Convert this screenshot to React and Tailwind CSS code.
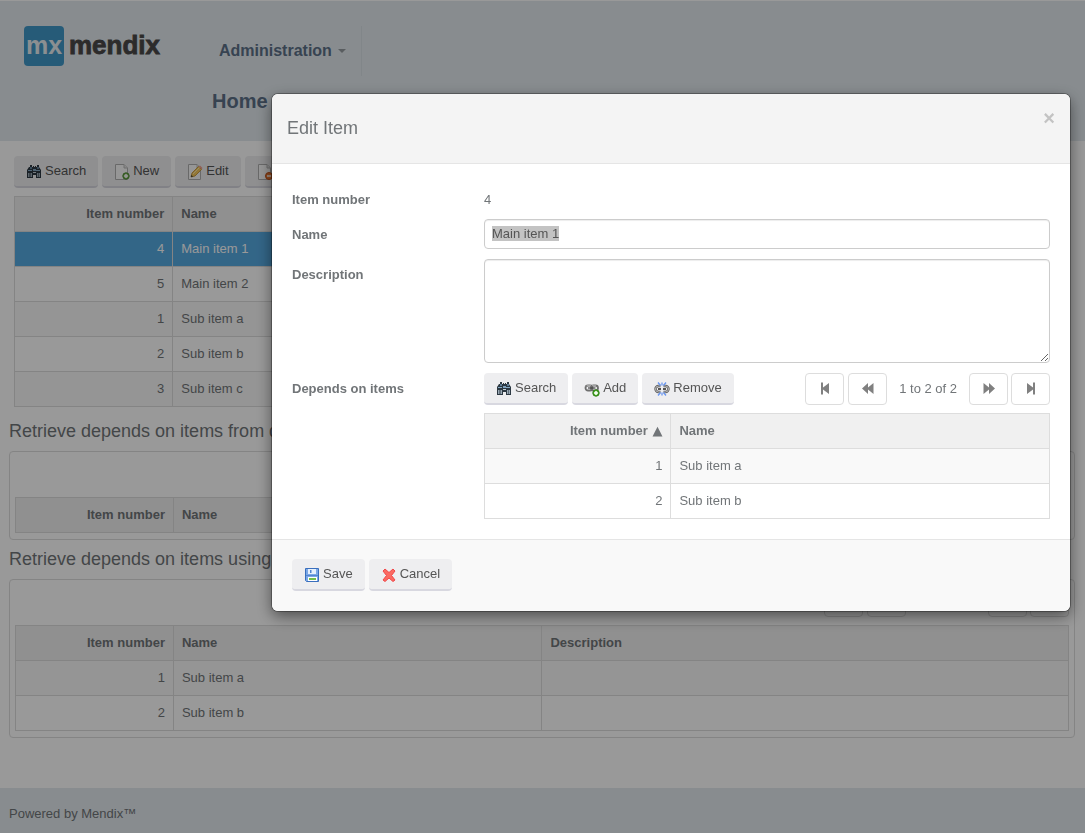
import { useEffect, useRef } from "react";

function BinocularsIcon() {
  return (
    <svg width="16" height="16" viewBox="0 0 16 16" aria-hidden="true">
      <path d="M4 1h2v2h1V2h1v1h1V2h1v1h1V1h2v2l2 3v8H10v-3H7v3H1V6l2-3h1z" fill="#2c3842" />
      <path d="M4 3h2v2H4zM11 3h2v2h-2z" fill="#5f7d96" />
      <path d="M2 6h4v1H2zM10 6h4v1h-4z" fill="#86a9c4" />
      <path d="M2 9h1.500v4H2zM4.500 9H6v4H4.500zM11 9h1.500v4H11zM13 9h1v4h-1z" fill="#9aa9b5" />
      <path d="M7 5h3v2H7z" fill="#7fa2bd" />
      <path d="M7 8h3v1H7z" fill="#c3ced6" />
    </svg>
  );
}

function PageIcon({ kind }) {
  return (
    <svg width="16" height="16" viewBox="0 0 16 16" aria-hidden="true">
      <path d="M1.500 .5h8.500l3.500 3.500v11.500h-12z" fill="#fbfbfb" stroke="#b0b0b0" />
      <path d="M10 .5v3.500h3.500" fill="#e4e4e4" stroke="#b8b8b8" />
      {kind === "new" && (
        <g>
          <circle cx="12" cy="12" r="3.200" fill="#7fb85e" stroke="#4a8a30" />
          <path d="M12 10v4M10 12h4" stroke="#fff" strokeWidth="1.500" />
        </g>
      )}
      {kind === "delete" && (
        <g>
          <circle cx="12" cy="12" r="3.500" fill="#f07a30" stroke="#c2521b" />
          <path d="M10 12h4" stroke="#fff" strokeWidth="1.500" />
        </g>
      )}
      {kind === "edit" && (
        <g>
          <path d="M4 13l1-4 6.500-6.500 3 3L8 12z" fill="#f5c65a" stroke="#b98a2c" strokeWidth=".8" />
          <path d="M11.500 2.500l3 3 1-1.500-2.500-2.500z" fill="#f0a090" />
          <path d="M6 10l6.500-6.500" stroke="#fde9a8" />
          <path d="M4 13l.5-2 1.500 1.500z" fill="#333" />
        </g>
      )}
    </svg>
  );
}

function LinkIcon({ broken }) {
  return (
    <svg width="16" height="16" viewBox="0 0 16 16" aria-hidden="true">
      {broken ? (
        <g fill="none">
          <path d="M6.500 5h-2a2.500 2.500 0 0 0 0 6h2M9.500 5h2a2.500 2.500 0 0 1 0 6h-2" stroke="#5c5c5c" strokeWidth="2.400" />
          <path d="M6.500 5h-2a2.500 2.500 0 0 0 0 6h2M9.500 5h2a2.500 2.500 0 0 1 0 6h-2" stroke="#d0d0d0" strokeWidth=".8" />
          <path d="M4 8h3M9 8h3" stroke="#555" strokeWidth="1.800" />
          <path d="M8 1.500v3M4 1.500l2.500 3M12 1.500l-2.500 3M8 11.500v3M4 14.500l2.500-3M12 14.500l-2.500-3" stroke="#6795f2" strokeWidth="1.300" />
        </g>
      ) : (
        <g fill="none">
          <rect x="1.500" y="4.500" width="7" height="5" rx="2.500" stroke="#6f6f6f" strokeWidth="1.800" />
          <rect x="7" y="4.500" width="7" height="5" rx="2.500" stroke="#6f6f6f" strokeWidth="1.800" />
          <path d="M2 5.500a2 2 0 0 1 2-1h3M8 4.500h4" stroke="#c4c4c4" strokeWidth=".6" />
          <path d="M4 7h7.500" stroke="#444" strokeWidth="1.200" />
          <circle cx="12" cy="12" r="3.200" fill="#4fb02c" stroke="#2f7d15" />
          <path d="M12 10v4M10 12h4" stroke="#fff" strokeWidth="1.500" />
        </g>
      )}
    </svg>
  );
}

function SaveIcon() {
  return (
    <svg width="16" height="16" viewBox="0 0 16 16" aria-hidden="true">
      <path d="M1.500 1.500h13v13h-12l-1-1z" fill="#7ba8e6" stroke="#3a6fbd" />
      <path d="M4 2h8v5H4z" fill="#e6f0fd" />
      <path d="M6 3h1.500v3H6z" fill="#4f82d0" />
      <path d="M2 8h12v1H2z" fill="#5486d2" />
      <path d="M4 10h9v4H4z" fill="#fff" />
      <path d="M5 11h7v2H5z" fill="#72bf4b" />
    </svg>
  );
}

function CrossIcon() {
  return (
    <svg width="16" height="16" viewBox="0 0 16 16" aria-hidden="true">
      <path d="M2 4l2-2 4 3.500L12 2l2 2-3.500 4.500L14 13l-2 1.500-4-3.500-4 3.500L2 13l3.500-4.500z" fill="#fb6a61" stroke="#f0474a" strokeLinejoin="round" />
    </svg>
  );
}

const pagerPaths = {
  first: "M3 1.500h2v5L11 2v11L5 8.500v5H3z",
  previous: "M1 7.500L7 2v4.500L12.500 2v11L7 8.500V13z",
  next: "M13 7.500L7 2v4.500L1.500 2v11L7 8.500V13z",
  last: "M11 1.500H9v5L3 2v11l6-4.500v5h2z",
};

function PagerButton({ kind }) {
  return (
    <button type="button" aria-label={kind + " page"} className="flex h-8 w-[39px] items-center justify-center rounded border border-[#ddd] bg-white pb-px">
      <svg width="14" height="15" viewBox="0 0 14 15" aria-hidden="true">
        <path d={pagerPaths[kind]} fill="#808080" />
      </svg>
    </button>
  );
}

function Pager({ status }) {
  return (
    <div className="flex items-center">
      <div className="flex gap-1">
        <PagerButton kind="first" />
        <PagerButton kind="previous" />
      </div>
      <span className="min-w-[81px] px-3 text-center">{status}</span>
      <div className="flex gap-[3px]">
        <PagerButton kind="next" />
        <PagerButton kind="last" />
      </div>
    </div>
  );
}

function ToolButton({ icon, children }) {
  return (
    <button type="button" className="flex h-8 items-center gap-[3px] rounded border-b-2 border-[#d8d8e0] bg-[#eeeef0] px-3 text-[#555]">
      <span className="pt-[2px]">{icon}</span>
      <span>{children}</span>
    </button>
  );
}

const cell = "h-[35px] border border-[#ddd] px-2";

function Grid({ columns, rows, selected, sorted }) {
  return (
    <table className="w-full table-fixed border-collapse bg-white">
      <colgroup>
        {columns.map(([title, width]) => (
          <col key={title} className={width} />
        ))}
      </colgroup>
      <thead>
        <tr className="bg-[#f0f0f0]">
          {columns.map(([title], index) => (
            <th key={title} scope="col" className={cell + (index === 0 ? " text-right" : " text-left")}>
              {title}
              {sorted === title && <span className="font-['DejaVu_Sans',sans-serif] leading-4"> ▲</span>}
            </th>
          ))}
        </tr>
      </thead>
      <tbody>
        {rows.map(([number, name], index) => (
          <tr key={number} className={selected === number ? "bg-[#56aae2] text-white" : index % 2 === 0 ? "bg-[#f9f9f9]" : "bg-white"}>
            <td className={cell + " text-right"}>{number}</td>
            <td className={cell}>{name}</td>
            {columns.length > 2 && <td className={cell} />}
          </tr>
        ))}
      </tbody>
    </table>
  );
}

const pageColumns = [
  ["Item number", "w-[15%]"],
  ["Name", "w-[35%]"],
  ["Description", "w-[50%]"],
];
const dialogColumns = [
  ["Item number", "w-[33%]"],
  ["Name", "w-[67%]"],
];
const allItems = [
  [4, "Main item 1"],
  [5, "Main item 2"],
  [1, "Sub item a"],
  [2, "Sub item b"],
  [3, "Sub item c"],
];
const subItems = [
  [1, "Sub item a"],
  [2, "Sub item b"],
];

function Logo() {
  return (
    <svg width="140" height="40" viewBox="0 0 140 40" role="img" aria-label="mendix">
      <rect width="40" height="40" rx="4" fill="#4098c8" />
      <text x="20" y="28" textAnchor="middle" fontFamily="'Liberation Sans', sans-serif" fontSize="25" fontWeight="700" fill="#e8eef2">mx</text>
      <text x="45" y="28" fontFamily="'Liberation Sans', sans-serif" fontSize="26" fontWeight="700" fill="#4a4849" stroke="#4a4849" strokeWidth=".8">mendix</text>
    </svg>
  );
}

function PageHeader() {
  return (
    <header className="flex h-[141px] border-t border-white bg-[#e3eaef] font-bold text-[#5c7088]">
      <a href="#home" className="w-[212px] shrink-0 pt-[25px] pl-6">
        <Logo />
      </a>
      <nav className="flex flex-col items-start pt-[25px]">
        <button type="button" className="flex h-[50px] items-center gap-[6px] border-r border-[#d8dfe4] pr-[15px] pl-[7px] text-base">
          Administration
          <svg width="8" height="4" viewBox="0 0 8 4" aria-hidden="true">
            <path d="M0 0h8L4 4z" fill="#959ba0" />
          </svg>
        </button>
        <a href="#home" className="flex h-[50px] items-center text-xl">Home</a>
      </nav>
    </header>
  );
}

function Panel({ status, rows }) {
  return (
    <div className="rounded border border-[#ddd] px-[5px] pt-[5px] pb-[6px]">
      <div className="mb-2 flex justify-end">
        <Pager status={status} />
      </div>
      <Grid columns={pageColumns} rows={rows} />
    </div>
  );
}

const fieldLabel = "h-[30px] leading-8 font-bold";

function EditDialog() {
  const nameRef = useRef(null);
  useEffect(() => {
    nameRef.current.focus();
    nameRef.current.select();
  }, []);
  return (
    <section role="dialog" aria-modal="true" aria-labelledby="dialog-title" className="w-[798px] max-w-full overflow-hidden rounded-md bg-white shadow-[0_0_0_1px_rgba(0,0,0,0.3),0_5px_15px_rgba(0,0,0,0.5)]">
      <header className="flex h-[70px] items-start justify-between border-b border-[#e5e5e5] bg-[#f4f4f4] px-[15px]">
        <h2 id="dialog-title" className="pt-5 text-lg">Edit Item</h2>
        <button type="button" aria-label="Close" className="mt-[14px] text-xl leading-5 font-bold text-[#c3c3c3]">×</button>
      </header>
      <form className="grid grid-cols-[192px_minmax(0,1fr)] gap-y-[10px] p-5">
        <div className="col-span-2 -mb-[5px] grid grid-cols-subgrid">
          <span className={fieldLabel}>Item number</span>
          <span className="h-[30px] leading-8">4</span>
        </div>
        <label htmlFor="item-name" className={fieldLabel}>Name</label>
        <input
          ref={nameRef}
          id="item-name"
          type="text"
          defaultValue="Main item 1"
          className="h-[30px] rounded border border-[#ccc] px-[7px] pb-[2px] text-[#555] shadow-[inset_0_1px_1px_rgba(0,0,0,0.075)] outline-none selection:bg-[#c3c3c3] selection:text-[#555]"
        />
        <label htmlFor="item-description" className={fieldLabel}>Description</label>
        <textarea id="item-description" className="h-[104px] resize-y rounded border border-[#ccc] px-[7px] py-1 shadow-[inset_0_1px_1px_rgba(0,0,0,0.075)] outline-none" />
        <span className={fieldLabel}>Depends on items</span>
        <div>
          <div className="mb-2 flex justify-between">
            <div className="flex gap-1">
              <ToolButton icon={<BinocularsIcon />}>Search</ToolButton>
              <ToolButton icon={<LinkIcon />}>Add</ToolButton>
              <ToolButton icon={<LinkIcon broken />}>Remove</ToolButton>
            </div>
            <Pager status="1 to 2 of 2" />
          </div>
          <Grid columns={dialogColumns} rows={subItems} sorted="Item number" />
        </div>
      </form>
      <footer className="flex gap-1 border-t border-[#e5e5e5] bg-[#f9f9f9] px-5 pt-[19px] pb-5">
        <ToolButton icon={<SaveIcon />}>Save</ToolButton>
        <ToolButton icon={<CrossIcon />}>Cancel</ToolButton>
      </footer>
    </section>
  );
}

export default function App() {
  return (
    <div className="flex min-h-screen flex-col bg-white font-['Liberation_Sans',sans-serif] text-[13px] leading-5 text-[#717578]">
      <PageHeader />
      <main className="grow pt-[15px] pr-[10px] pb-[49px] pl-[9px]">
        <div className="px-[5px] pb-[5px]">
          <div className="mb-2 flex gap-1">
            <ToolButton icon={<BinocularsIcon />}>Search</ToolButton>
            <ToolButton icon={<PageIcon kind="new" />}>New</ToolButton>
            <ToolButton icon={<PageIcon kind="edit" />}>Edit</ToolButton>
            <ToolButton icon={<PageIcon kind="delete" />}>Delete</ToolButton>
          </div>
          <Grid columns={pageColumns} rows={allItems} selected={4} />
        </div>
        <h2 className="text-lg leading-[39px]">Retrieve depends on items from database</h2>
        <Panel status="0 to 0 of 0" rows={[]} />
        <h2 className="text-lg leading-[39px]">Retrieve depends on items using association</h2>
        <Panel status="1 to 2 of 2" rows={subItems} />
      </main>
      <footer className="h-[45px] bg-[#e3eaef] px-[9px] pt-4">Powered by Mendix™</footer>
      <div className="fixed inset-0 flex items-start justify-end overflow-auto bg-black/40 pt-[94px] pr-[15px]">
        <EditDialog />
      </div>
    </div>
  );
}
